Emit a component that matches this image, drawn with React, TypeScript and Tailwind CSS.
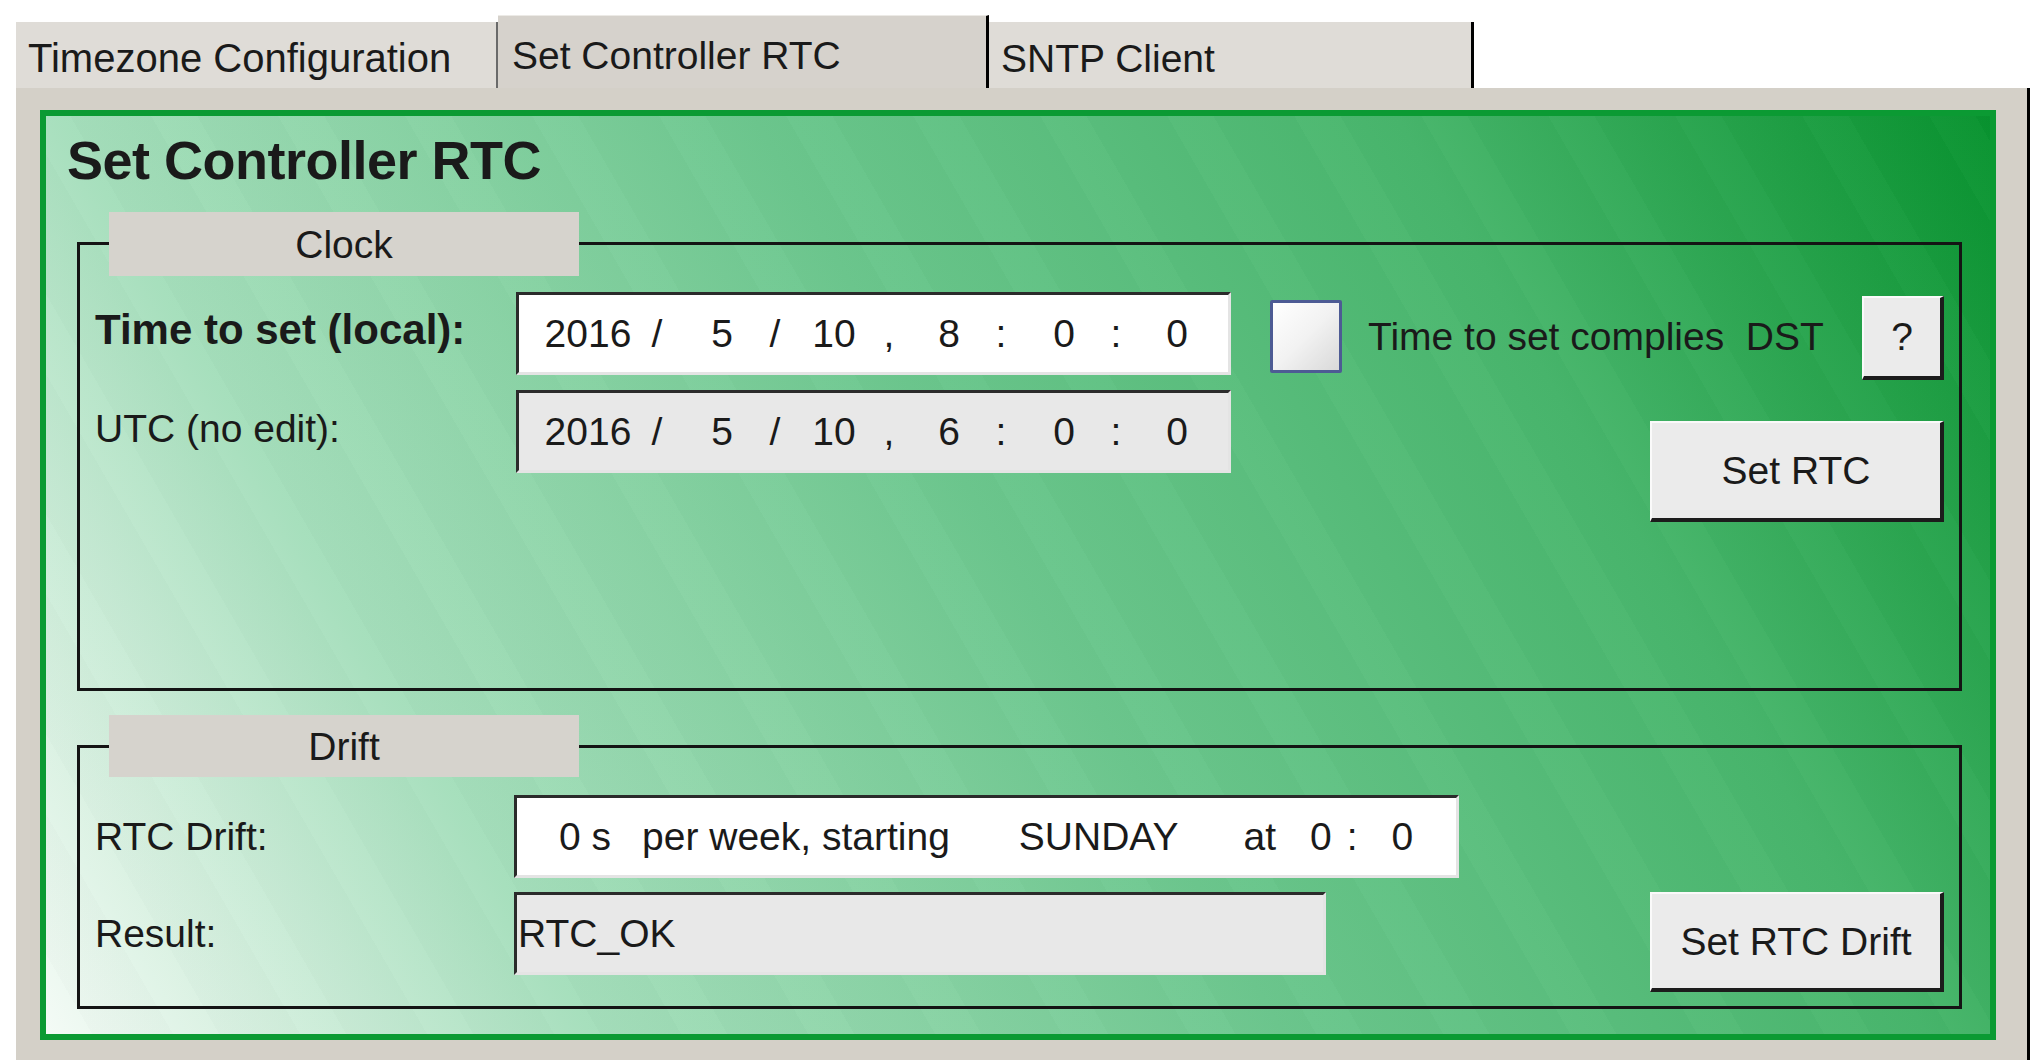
import React from "react";

function Cell({ cls, children }: { cls: string; children: React.ReactNode }) {
  return <span className={`text-center shrink-0 ${cls}`}>{children}</span>;
}

function DateField({ hour, gray }: { hour: string; gray?: boolean }) {
  return (
    <div
      className={`w-[715px] h-[83px] flex items-center pl-[24px] text-[39px] leading-none border-[3px] border-t-[#2b2b2b] border-l-[#2b2b2b] border-b-[#e4e4e4] border-r-[#e4e4e4] ${
        gray ? "bg-[#e8e8e8]" : "bg-white"
      }`}
    >
      <Cell cls="w-[90px]">2016</Cell>
      <Cell cls="w-[40px] ml-[4px]">/</Cell>
      <Cell cls="w-[40px] ml-[25px]">5</Cell>
      <Cell cls="w-[40px] ml-[13px]">/</Cell>
      <Cell cls="w-[60px] ml-[9px]">10</Cell>
      <Cell cls="w-[40px] ml-[5px]">,</Cell>
      <Cell cls="w-[40px] ml-[20px]">{hour}</Cell>
      <Cell cls="w-[40px] ml-[12px]">:</Cell>
      <Cell cls="w-[40px] ml-[23px]">0</Cell>
      <Cell cls="w-[40px] ml-[12px]">:</Cell>
      <Cell cls="w-[40px] ml-[21px]">0</Cell>
    </div>
  );
}

const btn =
  "bg-[#ebebeb] border-t-2 border-l-2 border-t-[#fafafa] border-l-[#fafafa] border-b-[4px] border-r-[4px] border-b-[#1c1c1c] border-r-[#1c1c1c] flex items-center justify-center text-[39px] leading-none";

export default function App() {
  return (
    <div className="w-[2039px] h-[1064px] bg-white overflow-hidden font-['Liberation_Sans',Arial,sans-serif] text-[#1a1a1a] pt-[15px] pl-[16px]">
      {/* Tabs */}
      <div className="flex items-end h-[73px]">
        <div className="w-[482px] h-[66px] bg-[#dfdcd7] border-r-2 border-r-[#6a6a6a] flex items-center pl-[12px] pt-[6px] text-[40px] leading-none whitespace-nowrap">
          Timezone Configuration
        </div>
        <div className="w-[491px] h-[73px] bg-[#d6d2cc] border-t border-t-[#eceae6] border-r-[3px] border-r-black flex items-center pl-[14px] pt-[7px] text-[39px] leading-none whitespace-nowrap">
          Set Controller RTC
        </div>
        <div className="w-[485px] h-[66px] bg-[#dfdcd7] border-r-[3px] border-r-black flex items-center pl-[12px] pt-[6px] text-[39px] leading-none whitespace-nowrap">
          SNTP Client
        </div>
      </div>

      {/* Gray panel */}
      <div className="w-[2014px] h-[972px] bg-[#d4d0c8] border-r-[3px] border-r-black pl-[24px] pt-[22px]">
        {/* Green panel */}
        <div className="w-[1956px] h-[930px] border-[6px] border-[#0b9a33] flex flex-col bg-[image:repeating-linear-gradient(60deg,rgba(255,255,255,0.015)_0px,rgba(255,255,255,0.015)_40px,rgba(0,0,0,0.01)_40px,rgba(0,0,0,0.01)_110px),linear-gradient(60deg,#f4fbf6_0%,#a6dfbc_22%,#6cc78e_50%,#48b66c_76%,#08932f_100%)]">
          <div className="pl-[21px] pt-[13px] text-[54px] font-bold leading-[62px] tracking-[-0.5px] whitespace-nowrap">
            Set Controller RTC
          </div>

          {/* Clock group */}
          <div className="relative mt-[21px] ml-[31px] w-[1885px] pt-[30px]">
            <div className="h-[449px] border-[3px] border-[#141414] flex pt-[47px] pl-[15px] pr-[15px]">
              <div className="flex flex-col gap-[14px]">
                <div className="flex items-center h-[83px]">
                  <div className="w-[421px] mb-[8px] text-[42px] font-bold leading-[48px] whitespace-nowrap">
                    Time to set (local):
                  </div>
                  <DateField hour="8" />
                </div>
                <div className="flex items-center h-[85px]">
                  <div className="w-[421px] mb-[6px] text-[39px] leading-[48px] whitespace-nowrap">
                    UTC (no edit):
                  </div>
                  <DateField hour="6" gray />
                </div>
              </div>
              <div className="flex-1 flex flex-col">
                <div className="flex items-center h-[83px]">
                  <div className="ml-[39px] mt-[6px] w-[72px] h-[73px] border-[3px] border-[#4d5b94] rounded-[2px] bg-linear-to-br from-[#ffffff] via-[#f2f2f2] to-[#d9d9d9]" />
                  <div className="ml-[26px] mt-[6px] text-[39px] leading-none whitespace-pre">
                    Time to set complies  DST
                  </div>
                  <div className={`ml-auto mt-[8px] w-[82px] h-[84px] ${btn}`}>?</div>
                </div>
                <div className={`self-end mt-[46px] w-[294px] h-[101px] ${btn}`}>Set RTC</div>
              </div>
            </div>
            <div className="absolute left-[32px] top-0 w-[470px] h-[64px] bg-[#d6d3cd] flex items-center justify-center text-[39px] leading-none">
              Clock
            </div>
          </div>

          {/* Drift group */}
          <div className="relative mt-[24px] ml-[31px] w-[1885px] pt-[30px]">
            <div className="h-[264px] border-[3px] border-[#141414] flex flex-col gap-[14px] pt-[47px] pl-[15px] pr-[15px]">
              <div className="flex items-center h-[83px]">
                <div className="w-[419px] text-[39px] leading-[48px] whitespace-nowrap">RTC Drift:</div>
                <div className="w-[945px] h-[83px] bg-white flex items-center text-[39px] leading-none whitespace-pre border-[3px] border-t-[#2b2b2b] border-l-[#2b2b2b] border-b-[#e4e4e4] border-r-[#e4e4e4]">
                  <span className="ml-[42px]">0 s</span>
                  <span className="ml-[31px]">per week, starting</span>
                  <span className="ml-[69px]">SUNDAY</span>
                  <span className="ml-[65px]">at</span>
                  <span className="ml-[34px]">0</span>
                  <span className="ml-[15px]">:</span>
                  <span className="ml-[34px]">0</span>
                </div>
              </div>
              <div className="flex items-start">
                <div className="w-[419px] h-[83px] flex items-center text-[39px] leading-none whitespace-nowrap">
                  Result:
                </div>
                <div className="w-[812px] h-[83px] bg-[#e8e8e8] flex items-center pl-[1px] text-[39px] leading-none border-[3px] border-t-[#2b2b2b] border-l-[#2b2b2b] border-b-[#e4e4e4] border-r-[#e4e4e4]">
                  RTC_OK
                </div>
                <div className={`ml-auto w-[294px] h-[100px] ${btn}`}>Set RTC Drift</div>
              </div>
            </div>
            <div className="absolute left-[32px] top-0 w-[470px] h-[62px] bg-[#d6d3cd] flex items-center justify-center text-[39px] leading-none">
              Drift
            </div>
          </div>
        </div>
      </div>
    </div>
  );
}
